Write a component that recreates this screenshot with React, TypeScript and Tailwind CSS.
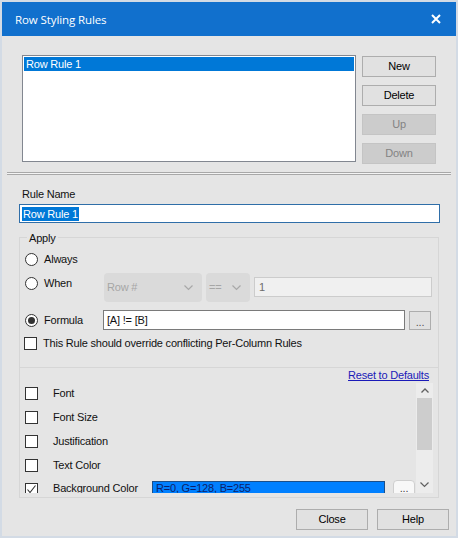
import React from "react";

const F = "font-['Liberation_Sans',Arial,sans-serif] text-[11px] tracking-[-0.2px] leading-[13px]";

function Radio({ checked }: { checked?: boolean }) {
  return (
    <div className="w-[13px] h-[13px] rounded-full border border-[#333] bg-white flex items-center justify-center shrink-0">
      {checked && <div className="w-[7px] h-[7px] rounded-full bg-[#333]" />}
    </div>
  );
}

function Check({ checked }: { checked?: boolean }) {
  return (
    <div className="w-[13px] h-[13px] border border-[#333] bg-white shrink-0 flex items-center justify-center">
      {checked && (
        <svg width="11" height="11" viewBox="0 0 11 11">
          <polyline points="1.5,5.5 4,8.5 9.5,1.5" fill="none" stroke="#333" strokeWidth="1.1" />
        </svg>
      )}
    </div>
  );
}

function Btn({ label, disabled, w = "w-[74px]" }: { label: string; disabled?: boolean; w?: string }) {
  return (
    <div
      className={`${w} h-[21px] flex items-center justify-center border ${
        disabled ? "bg-[#cccccc] border-[#c4c4c4] text-[#838383]" : "bg-[#e1e1e1] border-[#adadad] text-black"
      }`}
    >
      {label}
    </div>
  );
}

function Chevron({ color = "#a8a8a8" }: { color?: string }) {
  return (
    <svg width="9" height="6" viewBox="0 0 9 6">
      <polyline points="0.5,0.5 4.5,4.5 8.5,0.5" fill="none" stroke={color} strokeWidth="1.2" />
    </svg>
  );
}

function Combo({ label, w }: { label: string; w: string }) {
  return (
    <div className={`${w} h-[29px] rounded-[4px] bg-[#dadada] flex items-center justify-between pl-[3px] pr-[9px] text-[#a6a6a6]`}>
      <span>{label}</span>
      <Chevron />
    </div>
  );
}

export default function App() {
  return (
    <div className={`${F} w-[458px] h-[538px] bg-[#e5e5e5] border-2 border-[#d3dbe5] flex flex-col text-[#111]`}>
      {/* Title bar */}
      <div className="h-[34px] bg-[#1170cd] flex items-center justify-between pl-[13px] pr-[15px] text-white shrink-0">
        <span className="font-['Open_Sans',sans-serif] text-[11.5px] tracking-[-0.1px]">Row Styling Rules</span>
        <svg width="10" height="10" viewBox="0 0 10 10">
          <path d="M1 1 L9 9 M9 1 L1 9" stroke="white" strokeWidth="2" />
        </svg>
      </div>

      {/* Top: list + buttons */}
      <div className="flex items-start pt-[19px] pl-[20px]">
        <div className="w-[334px] h-[107px] bg-white border border-[#828790] p-[1px]">
          <div className="h-[14px] bg-[#0078d7] text-white flex items-center pl-[2px]">Row Rule 1</div>
        </div>
        <div className="ml-[6px] mt-[1px] flex flex-col gap-[8px]">
          <Btn label="New" />
          <Btn label="Delete" />
          <Btn label="Up" disabled />
          <Btn label="Down" disabled />
        </div>
      </div>

      {/* Separator */}
      <div className="ml-[5px] w-[444px] h-[3px] mt-[8px] border-t border-b border-[#a8a8a8] bg-[#f4f4f4]" />

      {/* Rule name */}
      <div className="pl-[20px] mt-[13px] h-[13px]">Rule Name</div>
      <div className="ml-[17px] mt-[3px] w-[421px] h-[19px] bg-white border border-[#2f6ea8] flex items-center pl-[2px]">
        <span className="bg-[#0078d7] text-white px-[1px] leading-[14px]">Row Rule 1</span>
      </div>

      {/* Apply group */}
      <div className="relative ml-[17px] mt-[14px] w-[420px] h-[131px] border border-[#d6d6d6] flex flex-col pl-[5px]">
        <div className="absolute left-[7px] top-[-7px] bg-[#e5e5e5] px-[2px] leading-[14px]">Apply</div>
        <div className="mt-[15px] flex items-center h-[13px]">
          <Radio />
          <span className="ml-[6px]">Always</span>
        </div>
        <div className="mt-[7px] flex items-start h-[29px]">
          <div className="mt-[4px] h-[13px] flex items-center">
            <Radio />
            <span className="ml-[6px] w-[60px]">When</span>
          </div>
          <Combo label="Row #" w="w-[98px]" />
          <div className="ml-[4px]">
            <Combo label="==" w="w-[44px]" />
          </div>
          <div className="ml-[4px] mt-[4px] w-[178px] h-[20px] bg-[#f0f0f0] border border-[#cccccc] text-[#6d6d6d] flex items-center pl-[4px]">
            1
          </div>
        </div>
        <div className="mt-[8px] flex items-center h-[20px]">
          <Radio checked />
          <span className="ml-[6px] w-[59px]">Formula</span>
          <div className="w-[302px] h-[20px] bg-white border border-[#7a7a7a] flex items-center pl-[3px]">[A] != [B]</div>
          <div className="ml-[4px] w-[22px] h-[19px] bg-[#e1e1e1] border border-[#adadad] flex items-end justify-center pb-[2px] text-[#555] leading-[10px]">
            ...
          </div>
        </div>
        <div className="mt-[7px] flex items-center h-[13px] -ml-[1px]">
          <Check />
          <span className="ml-[6px]">This Rule should override conflicting Per-Column Rules</span>
        </div>
      </div>

      {/* Properties panel */}
      <div className="ml-[17px] w-[420px] h-[130px] border-l border-r border-b border-[#d6d6d6] flex flex-col">
        <div className="h-[15px] flex items-center justify-end pr-[9px]">
          <span className="text-[#1a1ab8] underline">Reset to Defaults</span>
        </div>
        <div className="flex h-[110px] pr-[5px]">
          <div className="flex-1 overflow-hidden pl-[5px] pt-[4px] flex flex-col">
            {["Font", "Font Size", "Justification", "Text Color"].map((t) => (
              <div key={t} className="flex items-center h-[13px] mb-[11px] shrink-0">
                <Check />
                <span className="ml-[15px]">{t}</span>
              </div>
            ))}
            <div className="flex items-start h-[13px] shrink-0">
              <Check checked />
              <span className="ml-[15px] w-[99px] leading-[11px]">Background Color</span>
              <div className="-mt-[2px] w-[233px] h-[20px] bg-[#0080ff] border border-[#1b4f8a] pl-[3px] text-[#0d1f6a] leading-[12px]">
                R=0, G=128, B=255
              </div>
              <div className="-mt-[3px] ml-[8px] w-[22px] h-[22px] rounded-[4px] bg-[#f8f8f8] border border-[#cfcfcf] flex items-start justify-center pt-[3px] text-[#444] leading-[8px]">
                ...
              </div>
            </div>
          </div>
          <div className="w-[17px] h-[110px] bg-[#ececec] flex flex-col items-center">
            <div className="h-[15px] flex items-center justify-center">
              <svg width="8" height="5" viewBox="0 0 8 5">
                <polyline points="0.5,4.5 4,1 7.5,4.5" fill="none" stroke="#606060" strokeWidth="1.3" />
              </svg>
            </div>
            <div className="w-[15px] h-[52px] bg-[#cdcdcd]" />
            <div className="flex-1" />
            <div className="h-[17px] flex items-center justify-center">
              <Chevron color="#606060" />
            </div>
          </div>
        </div>
      </div>

      {/* Bottom buttons */}
      <div className="flex justify-end gap-[9px] mt-[11px] pr-[7px]">
        <Btn label="Close" w="w-[72px]" />
        <Btn label="Help" w="w-[72px]" />
      </div>
    </div>
  );
}
